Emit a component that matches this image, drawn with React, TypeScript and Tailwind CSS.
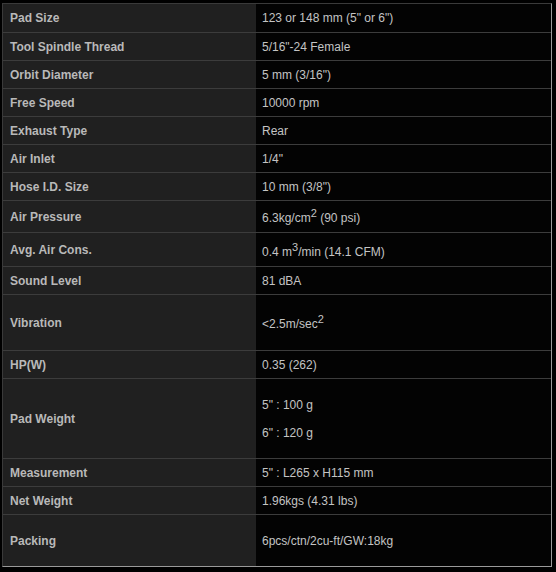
import React from "react";

type Row = { label: string; value: React.ReactNode; h: string; vpad?: string };

const Sup = ({ children }: { children: React.ReactNode }) => (
  <sup className="relative -top-[5px] text-[11px] leading-none align-baseline">{children}</sup>
);

const rows: Row[] = [
  { label: "Pad Size", value: '123 or 148 mm (5" or 6")', h: "h-[28px]" },
  { label: "Tool Spindle Thread", value: '5/16"-24 Female', h: "h-[27px]" },
  { label: "Orbit Diameter", value: '5 mm (3/16")', h: "h-[27px]" },
  { label: "Free Speed", value: "10000 rpm", h: "h-[27px]" },
  { label: "Exhaust Type", value: "Rear", h: "h-[27px]" },
  { label: "Air Inlet", value: '1/4"', h: "h-[27px]" },
  { label: "Hose I.D. Size", value: '10 mm (3/8")', h: "h-[27px]" },
  {
    label: "Air Pressure",
    value: (
      <>
        6.3kg/cm<Sup>2</Sup> (90 psi)
      </>
    ),
    h: "h-[31px]",
    vpad: "pt-[4px]",
  },
  {
    label: "Avg. Air Cons.",
    value: (
      <>
        0.4 m<Sup>3</Sup>/min (14.1 CFM)
      </>
    ),
    h: "h-[33px]",
    vpad: "pt-[5px]",
  },
  { label: "Sound Level", value: "81 dBA", h: "h-[27px]" },
  {
    label: "Vibration",
    value: (
      <>
        &lt;2.5m/sec<Sup>2</Sup>
      </>
    ),
    h: "h-[55px]",
    vpad: "pt-[3px]",
  },
  { label: "HP(W)", value: "0.35 (262)", h: "h-[27px]" },
  {
    label: "Pad Weight",
    value: (
      <div className="flex flex-col gap-[13px]">
        <span>5" : 100 g</span>
        <span>6" : 120 g</span>
      </div>
    ),
    h: "h-[79px]",
  },
  { label: "Measurement", value: '5" : L265 x H115 mm', h: "h-[27px]" },
  { label: "Net Weight", value: "1.96kgs (4.31 lbs)", h: "h-[27px]" },
  { label: "Packing", value: "6pcs/ctn/2cu-ft/GW:18kg", h: "h-[51px]" },
];

export default function App() {
  return (
    <div
      className="w-[556px] h-[572px] bg-black pt-[3px] pl-[2px]"
      style={{ fontFamily: '"Liberation Sans", Arial, sans-serif' }}
    >
      <div className="w-[550px] flex flex-col border border-t-[#3a3a3a] border-l-[#3a3a3a] border-r-[#9a9a9a] border-b-[#9a9a9a]">
        {rows.map((r, i) => (
          <div
            key={r.label}
            className={`grid grid-cols-[253px_1fr] ${r.h} ${
              i < rows.length - 1 ? "border-b border-[#3c3c3c] box-content" : ""
            }`}
          >
            <div className="bg-[#202020] flex items-center pl-[7px] pt-[1px] text-[12px] leading-[15px] font-bold text-[#b9b9b9]">
              {r.label}
            </div>
            <div
              className={`bg-[#030303] flex items-center pl-[6px] text-[12px] leading-[15px] text-[#c4c4c4] ${
                r.vpad ?? "pt-[1px]"
              }`}
            >
              <div>{r.value}</div>
            </div>
          </div>
        ))}
      </div>
    </div>
  );
}
